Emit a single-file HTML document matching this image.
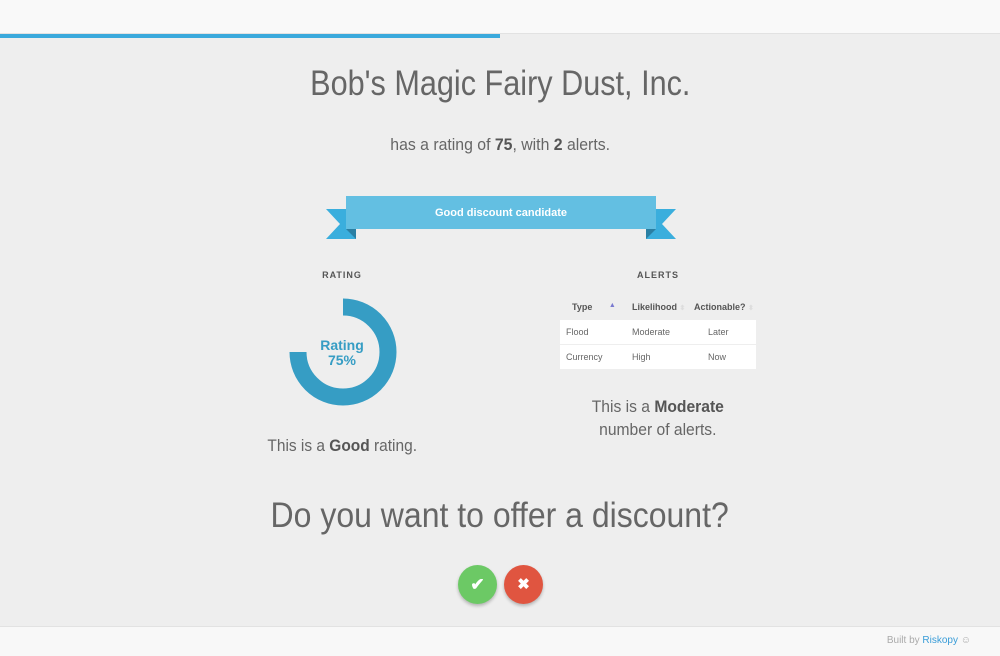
<!DOCTYPE html><html><head><style>
body{margin:0;width:1000px;height:655px;background:#eeeeee;font-family:"Liberation Sans",sans-serif;position:relative;overflow:hidden;color:#555}
.a{position:absolute}
.c{position:absolute;left:0;width:1000px;text-align:center}
.s{display:inline-block}
th{font-weight:bold;font-size:9px;color:#555;text-align:left;height:24px;padding:0}
td{font-size:9px;color:#666;height:24px;padding:0;background:#fff;border-top:1px solid #eee}
</style></head><body>
<div class="a" style="left:0;top:0;width:1000px;height:33px;background:#f9f9f9;border-bottom:1px solid #e2e2e2"></div>
<div class="a" style="left:0;top:34px;width:500px;height:4px;background:#3aa9dc"></div>
<div class="c" style="top:64px;font-size:35px;color:#666"><span class="s" style="transform:scaleX(0.875)">Bob's Magic Fairy Dust, Inc.</span></div>
<div class="c" style="top:135px;font-size:17px;color:#666"><span class="s" style="transform:scaleX(0.93)">has a rating of <b style="color:#555">75</b>, with <b style="color:#555">2</b> alerts.</span></div>
<svg class="a" style="left:324px;top:195px" width="354" height="46">
<polygon points="2,14 32,14 32,44 2,44 16,29" fill="#3aaedd"/>
<polygon points="352,14 322,14 322,44 352,44 338,29" fill="#3aaedd"/>
<polygon points="22,34 32,34 32,44" fill="#2a7fa3"/>
<polygon points="322,34 332,34 322,44" fill="#2a7fa3"/>
<rect x="22" y="1" width="310" height="33" fill="#63bfe2"/>
<text x="177" y="21" text-anchor="middle" font-family="Liberation Sans" font-weight="bold" font-size="11" fill="#fff">Good discount candidate</text>
</svg>
<div class="a" style="left:292px;top:270px;width:100px;text-align:center;font-size:9px;font-weight:bold;letter-spacing:1px;color:#555">RATING</div>
<div class="a" style="left:608px;top:270px;width:100px;text-align:center;font-size:9px;font-weight:bold;letter-spacing:1px;color:#555">ALERTS</div>
<svg class="a" style="left:280px;top:290px" width="125" height="125">
<path d="M63 17 A45 45 0 1 1 18 62" fill="none" stroke="#369dc4" stroke-width="17"/>
<text x="62" y="60" text-anchor="middle" font-family="Liberation Sans" font-weight="bold" font-size="14" fill="#369dc4">Rating</text>
<text x="62" y="75" text-anchor="middle" font-family="Liberation Sans" font-weight="bold" font-size="14" fill="#369dc4">75%</text>
</svg>
<div class="a" style="left:192px;top:436px;width:300px;text-align:center;font-size:17px;color:#666"><span class="s" style="transform:scaleX(0.91)">This is a <b style="color:#555">Good</b> rating.</span></div>
<table class="a" style="left:560px;top:295px;width:196px;border-collapse:collapse">
<tr><th style="padding-left:12px;width:60px">Type <span style="color:#7a7ad0;font-size:7px;margin-left:14px;vertical-align:top">▲</span></th><th style="width:62px">Likelihood <span style="color:#ddd;font-size:7px">⬍</span></th><th>Actionable? <span style="color:#ddd;font-size:7px">⬍</span></th></tr>
<tr><td style="padding-left:6px">Flood</td><td>Moderate</td><td style="padding-left:14px">Later</td></tr>
<tr><td style="padding-left:6px">Currency</td><td>High</td><td style="padding-left:14px">Now</td></tr>
</table>
<div class="a" style="left:508px;top:395px;width:300px;text-align:center;font-size:17px;color:#666;line-height:23px"><span class="s" style="transform:scaleX(0.92)">This is a <b style="color:#555">Moderate</b><br>number of alerts.</span></div>
<div class="c" style="top:496px;font-size:35px;color:#666"><span class="s" style="transform:scaleX(0.914)">Do you want to offer a discount?</span></div>
<div class="a" style="left:458px;top:565px;width:39px;height:39px;border-radius:50%;background:#6cc965;box-shadow:0 2px 3px rgba(0,0,0,.25);color:#fff;font-size:17px;text-align:center;line-height:39px;font-weight:bold">✔</div>
<div class="a" style="left:504px;top:565px;width:39px;height:39px;border-radius:50%;background:#e05540;box-shadow:0 2px 3px rgba(0,0,0,.25);color:#fff;font-size:15px;text-align:center;line-height:39px;font-weight:bold">✖</div>
<div class="a" style="left:0;top:626px;width:1000px;height:29px;background:#f8f8f8;border-top:1px solid #e2e2e2"></div>
<div class="a" style="right:29px;top:635px;font-size:10px;color:#aaa">Built by <span style="color:#3a9dd8">Riskopy</span> ☺</div>
</body></html>
